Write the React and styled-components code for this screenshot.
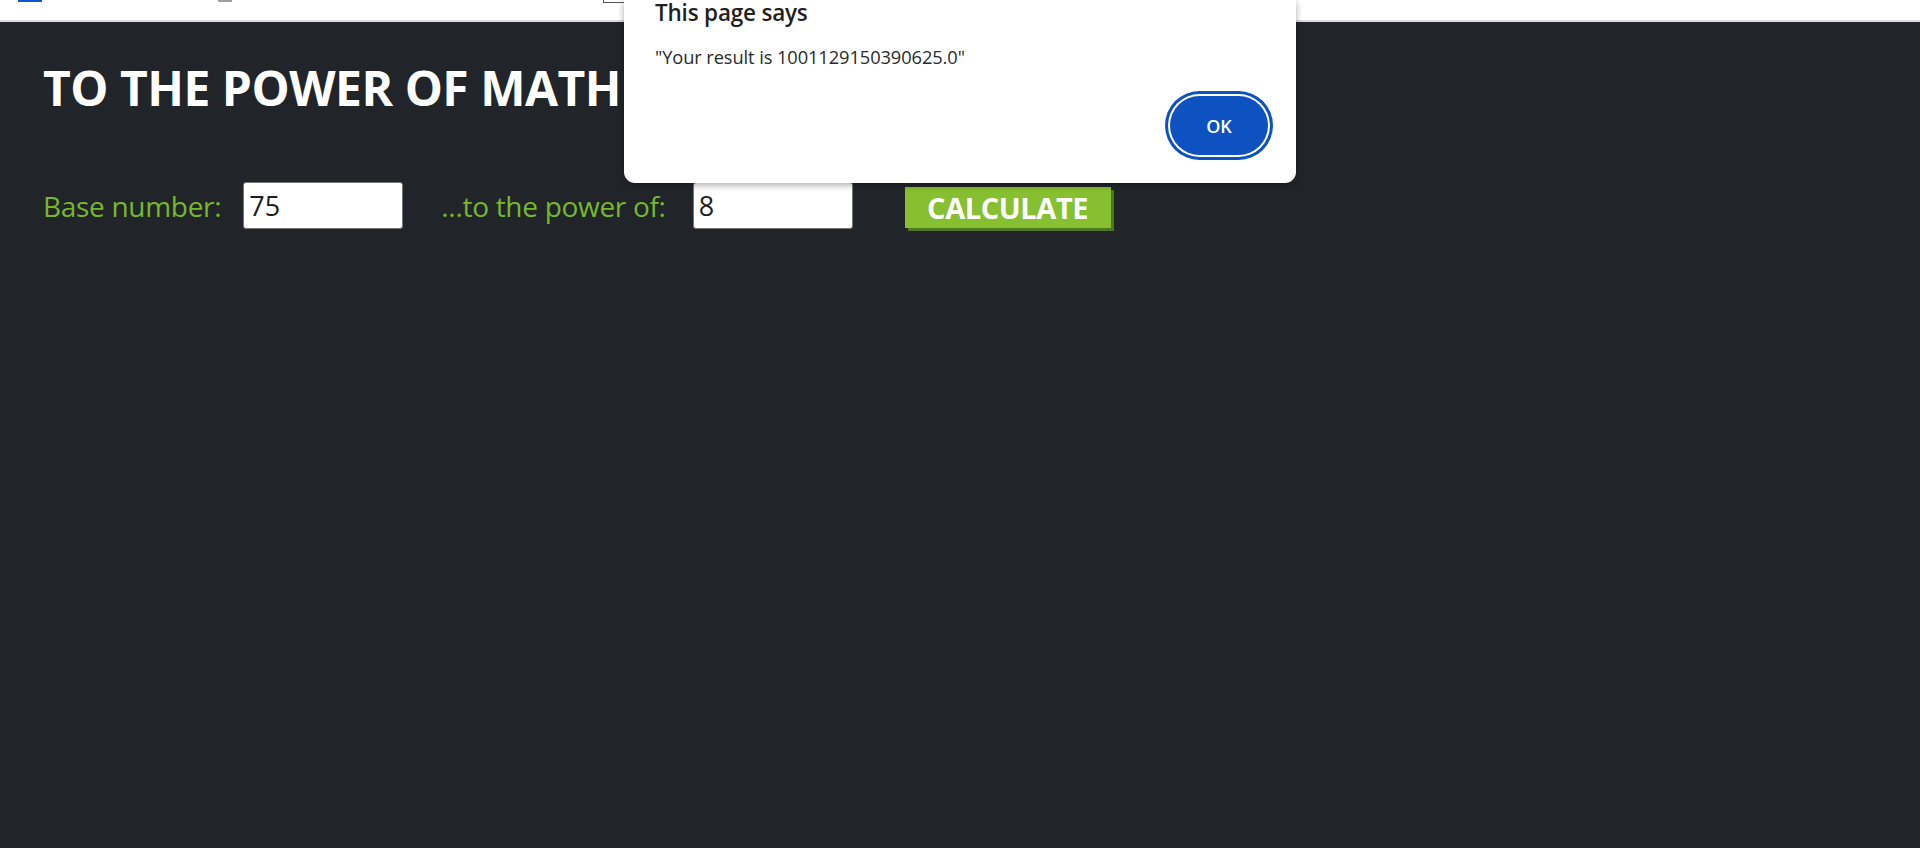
import React from 'react';
import styled, { createGlobalStyle } from 'styled-components';

const GlobalStyle = createGlobalStyle`
  html, body {
    margin: 0;
    padding: 0;
    height: 100%;
    background: #212529;
    overflow: hidden;
  }
  #root {
    height: 100%;
  }
`;

const Screen = styled.div`
  position: relative;
  height: 848px;
  display: flex;
  flex-direction: column;
  font-family: 'Open Sans', 'Noto Sans', sans-serif;
`;

const BrowserStrip = styled.div`
  height: 20px;
  flex-shrink: 0;
  background: #ffffff;
  border-bottom: 2px solid #dadce0;
  display: flex;
  align-items: flex-start;
`;

const StripTab = styled.span`
  display: block;
  margin-left: ${({ $left }) => $left}px;
  width: ${({ $width }) => $width}px;
  height: 2px;
  background: ${({ $color }) => $color};
`;

const StripBox = styled.span`
  display: block;
  margin-left: ${({ $left }) => $left}px;
  width: 20px;
  height: 2px;
  border-left: 1px solid #555;
  border-bottom: 1px solid #555;
`;

const Page = styled.main`
  flex: 1;
  padding: 36px 0 0 43px;
`;

const Title = styled.h1`
  margin: 0;
  font-size: 48px;
  line-height: 60px;
  font-weight: 700;
  color: #ffffff;
  letter-spacing: -0.5px;
`;

const FormRow = styled.form`
  margin-top: 64px;
  display: flex;
  align-items: center;
`;

const Label = styled.label`
  font-size: 28px;
  color: #77b82c;
  margin-right: ${({ $gap }) => $gap}px;
  letter-spacing: -0.3px;
`;

const NumberInput = styled.input`
  box-sizing: border-box;
  width: 160px;
  height: 47px;
  padding: 0 5px;
  border: 1px solid #767676;
  border-radius: 3px;
  background: #ffffff;
  font-family: 'Open Sans', 'Noto Sans', sans-serif;
  font-size: 27px;
  color: #1b1e21;
  margin-right: ${({ $gap }) => $gap}px;
  outline: none;
`;

const CalcButton = styled.button`
  margin-top: 3px;
  width: 206px;
  height: 41px;
  padding: 0;
  border: none;
  background: #86bf30;
  box-shadow: 3px 3px 0 #4e781e;
  color: #ffffff;
  font-family: 'Open Sans', 'Noto Sans', sans-serif;
  font-size: 29px;
  line-height: 41px;
  font-weight: 700;
  letter-spacing: -0.4px;
  cursor: pointer;
`;

const AlertDialog = styled.div`
  position: absolute;
  top: 0;
  left: 624px;
  width: 672px;
  height: 183px;
  box-sizing: border-box;
  padding: 0 28px 0 31px;
  background: #ffffff;
  border-radius: 0 0 11px 11px;
  box-shadow: 0 2px 7px rgba(0, 0, 0, 0.35);
  display: flex;
  flex-direction: column;
  font-family: 'Open Sans', 'Noto Sans', sans-serif;
  color: #1f1f1f;
`;

const DialogTitle = styled.div`
  font-size: 22.5px;
  font-weight: 600;
  line-height: 28px;
  margin-top: -1px;
  letter-spacing: -0.2px;
`;

const DialogMessage = styled.div`
  margin-top: 18px;
  font-size: 18.3px;
  line-height: 24px;
  color: #2a2a2a;
  letter-spacing: -0.1px;
`;

const DialogActions = styled.div`
  margin-top: 27px;
  display: flex;
  justify-content: flex-end;
`;

const OkButton = styled.button`
  width: 98px;
  height: 59px;
  border: none;
  border-radius: 30px;
  background: #0d52c0;
  color: #ffffff;
  font-family: 'Open Sans', 'Noto Sans', sans-serif;
  font-size: 18px;
  font-weight: 600;
  box-shadow: 0 0 0 2px #ffffff, 0 0 0 5px #0d52c0;
  cursor: pointer;
`;

export default function App() {
  return (
    <>
      <GlobalStyle />
      <Screen>
        <BrowserStrip>
          <StripTab $left={18} $width={24} $color='#0b57d0' />
          <StripTab $left={176} $width={14} $color='#9aa0a6' />
          <StripBox $left={371} />
        </BrowserStrip>
        <Page>
          <Title>TO THE POWER OF MATH</Title>
          <FormRow onSubmit={(e) => e.preventDefault()}>
            <Label htmlFor='base' $gap={22}>Base number:</Label>
            <NumberInput id='base' type='text' defaultValue='75' $gap={38} />
            <Label htmlFor='power' $gap={27}>...to the power of:</Label>
            <NumberInput id='power' type='text' defaultValue='8' $gap={52} />
            <CalcButton type='submit'>CALCULATE</CalcButton>
          </FormRow>
        </Page>
        <AlertDialog role='alertdialog'>
          <DialogTitle>This page says</DialogTitle>
          <DialogMessage>"Your result is 1001129150390625.0"</DialogMessage>
          <DialogActions>
            <OkButton type='button'>OK</OkButton>
          </DialogActions>
        </AlertDialog>
      </Screen>
    </>
  );
}
